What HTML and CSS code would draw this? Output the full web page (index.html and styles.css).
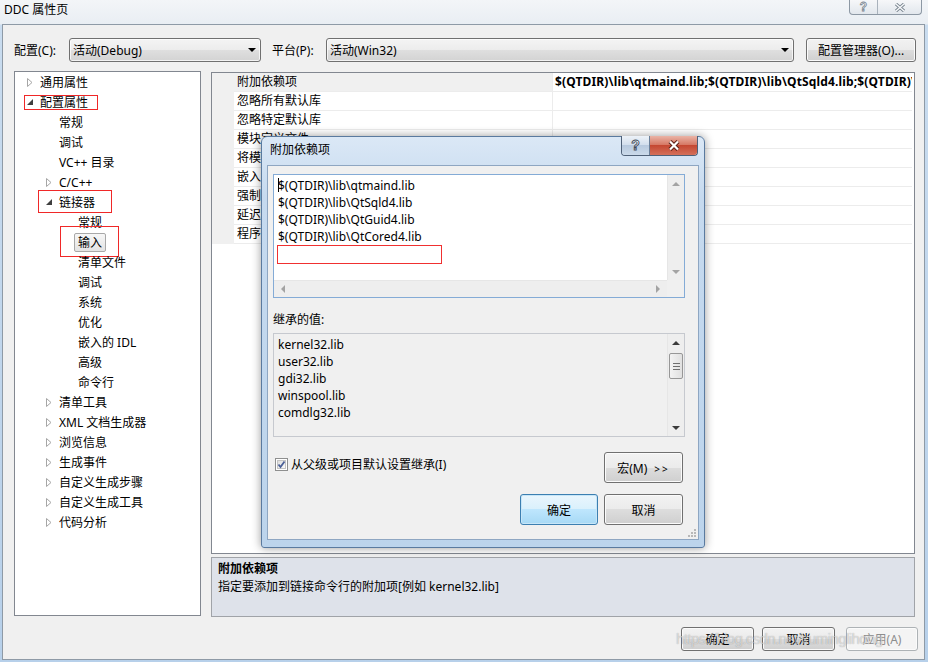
FILE: index.html
```html
<!DOCTYPE html>
<html lang="zh-CN">
<head>
    <meta charset="UTF-8">
    <meta name="viewport" content="width=device-width, initial-scale=1.0">
    <title>DDC 属性页</title>
    <link rel="stylesheet" href="styles.css">
</head>
<body>
<div class="window">
    <div class="titlebar">
        <div class="title">DDC 属性页</div>
        <div class="caption">
            <span class="cap-help">?</span>
            <span class="cap-close">
                <svg width="12" height="9" viewBox="0 0 12 9"><path d="M2 1 L10 8 M10 1 L2 8" stroke="#7b8691" stroke-width="3.2"/><path d="M2 1 L10 8 M10 1 L2 8" stroke="#f6f8fa" stroke-width="1.4"/></svg>
            </span>
        </div>
    </div>

    <div class="client">
        <div class="toolbar">
            <span class="tb-label">配置(C):</span>
            <div class="combo combo-config">活动(Debug)<span class="combo-arrow"></span></div>
            <span class="tb-label tb-label-2">平台(P):</span>
            <div class="combo combo-platform">活动(Win32)<span class="combo-arrow"></span></div>
            <button class="btn btn-manager">配置管理器(O)...</button>
        </div>

        <div class="main">
            <div class="tree">
                <div class="node lv0"><span class="tw"><svg width="6" height="9" viewBox="0 0 6 9"><path d="M0.5 0.5 L5 4.5 L0.5 8.5 Z" fill="#fff" stroke="#a6a6a6"/></svg></span>通用属性</div>
                <div class="node lv0"><span class="tw"><svg width="6" height="6" viewBox="0 0 6 6"><path d="M6 0 V6 H0 Z" fill="#3f3f3f"/></svg></span>配置属性<span class="mark mark-config"></span></div>
                <div class="node lv1"><span class="tw"></span>常规</div>
                <div class="node lv1"><span class="tw"></span>调试</div>
                <div class="node lv1"><span class="tw"></span>VC++ 目录</div>
                <div class="node lv1"><span class="tw"><svg width="6" height="9" viewBox="0 0 6 9"><path d="M0.5 0.5 L5 4.5 L0.5 8.5 Z" fill="#fff" stroke="#a6a6a6"/></svg></span>C/C++</div>
                <div class="node lv1"><span class="tw"><svg width="6" height="6" viewBox="0 0 6 6"><path d="M6 0 V6 H0 Z" fill="#3f3f3f"/></svg></span>链接器<span class="mark mark-linker"></span></div>
                <div class="node lv2"><span class="tw"></span>常规</div>
                <div class="node lv2"><span class="tw"></span><span class="sel">输入</span><span class="mark mark-input"></span></div>
                <div class="node lv2"><span class="tw"></span>清单文件</div>
                <div class="node lv2"><span class="tw"></span>调试</div>
                <div class="node lv2"><span class="tw"></span>系统</div>
                <div class="node lv2"><span class="tw"></span>优化</div>
                <div class="node lv2"><span class="tw"></span>嵌入的 IDL</div>
                <div class="node lv2"><span class="tw"></span>高级</div>
                <div class="node lv2"><span class="tw"></span>命令行</div>
                <div class="node lv1"><span class="tw"><svg width="6" height="9" viewBox="0 0 6 9"><path d="M0.5 0.5 L5 4.5 L0.5 8.5 Z" fill="#fff" stroke="#a6a6a6"/></svg></span>清单工具</div>
                <div class="node lv1"><span class="tw"><svg width="6" height="9" viewBox="0 0 6 9"><path d="M0.5 0.5 L5 4.5 L0.5 8.5 Z" fill="#fff" stroke="#a6a6a6"/></svg></span>XML 文档生成器</div>
                <div class="node lv1"><span class="tw"><svg width="6" height="9" viewBox="0 0 6 9"><path d="M0.5 0.5 L5 4.5 L0.5 8.5 Z" fill="#fff" stroke="#a6a6a6"/></svg></span>浏览信息</div>
                <div class="node lv1"><span class="tw"><svg width="6" height="9" viewBox="0 0 6 9"><path d="M0.5 0.5 L5 4.5 L0.5 8.5 Z" fill="#fff" stroke="#a6a6a6"/></svg></span>生成事件</div>
                <div class="node lv1"><span class="tw"><svg width="6" height="9" viewBox="0 0 6 9"><path d="M0.5 0.5 L5 4.5 L0.5 8.5 Z" fill="#fff" stroke="#a6a6a6"/></svg></span>自定义生成步骤</div>
                <div class="node lv1"><span class="tw"><svg width="6" height="9" viewBox="0 0 6 9"><path d="M0.5 0.5 L5 4.5 L0.5 8.5 Z" fill="#fff" stroke="#a6a6a6"/></svg></span>自定义生成工具</div>
                <div class="node lv1"><span class="tw"><svg width="6" height="9" viewBox="0 0 6 9"><path d="M0.5 0.5 L5 4.5 L0.5 8.5 Z" fill="#fff" stroke="#a6a6a6"/></svg></span>代码分析</div>
            </div>

            <div class="right">
                <div class="grid">
                    <div class="prop sel-row"><span class="gut"></span><span class="pname">附加依赖项</span><span class="pval bold">$(QTDIR)\lib\qtmaind.lib;$(QTDIR)\lib\QtSqld4.lib;$(QTDIR)\lib\QtGuid4.lib;$(QTDIR)\lib\QtCored4.lib;%(AdditionalDependencies)</span></div>
                    <div class="prop"><span class="gut"></span><span class="pname">忽略所有默认库</span><span class="pval"></span></div>
                    <div class="prop"><span class="gut"></span><span class="pname">忽略特定默认库</span><span class="pval"></span></div>
                    <div class="prop"><span class="gut"></span><span class="pname">模块定义文件</span><span class="pval"></span></div>
                    <div class="prop"><span class="gut"></span><span class="pname">将模块添加到程序集</span><span class="pval"></span></div>
                    <div class="prop"><span class="gut"></span><span class="pname">嵌入托管资源文件</span><span class="pval"></span></div>
                    <div class="prop"><span class="gut"></span><span class="pname">强制符号引用</span><span class="pval"></span></div>
                    <div class="prop"><span class="gut"></span><span class="pname">延迟加载的 DLL</span><span class="pval"></span></div>
                    <div class="prop"><span class="gut"></span><span class="pname">程序集链接资源</span><span class="pval"></span></div>
                </div>
                <div class="desc">
                    <div class="desc-title">附加依赖项</div>
                    <div>指定要添加到链接命令行的附加项[例如 kernel32.lib]</div>
                </div>
            </div>
        </div>

        <div class="footer">
            <button class="btn btn-foot">确定</button>
            <button class="btn btn-foot">取消</button>
            <button class="btn btn-foot btn-disabled">应用(A)</button>
        </div>
    </div>

    <!-- modal: 附加依赖项 -->
    <div class="dialog">
        <div class="dlg-titlebar">
            <div class="dlg-title">附加依赖项</div>
            <div class="dlg-caption">
                <span class="dlg-help">?</span>
                <span class="dlg-close">
                    <svg width="14" height="11" viewBox="0 0 14 11"><path d="M3 1.5 L11 9.5 M11 1.5 L3 9.5" stroke="#5a2118" stroke-width="4.2"/><path d="M3 1.5 L11 9.5 M11 1.5 L3 9.5" stroke="#fff" stroke-width="2.2"/></svg>
                </span>
            </div>
        </div>
        <div class="dlg-client">
            <div class="edit">
                <div class="edit-text">
                    <div><span class="caret"></span>$(QTDIR)\lib\qtmaind.lib</div>
                    <div>$(QTDIR)\lib\QtSqld4.lib</div>
                    <div>$(QTDIR)\lib\QtGuid4.lib</div>
                    <div>$(QTDIR)\lib\QtCored4.lib</div>
                    <div class="new-line"></div>
                </div>
                <div class="vscroll">
                    <span class="sb-btn"><span class="arr-up"></span></span>
                    <span class="sb-btn"><span class="arr-down"></span></span>
                </div>
                <div class="hscroll">
                    <span class="arr-left"></span>
                    <span class="arr-right"></span>
                </div>
                <div class="sb-corner"></div>
            </div>

            <div class="inh-label">继承的值:</div>
            <div class="list">
                <div class="list-text">
                    <div>kernel32.lib</div>
                    <div>user32.lib</div>
                    <div>gdi32.lib</div>
                    <div>winspool.lib</div>
                    <div>comdlg32.lib</div>
                </div>
                <div class="vscroll active">
                    <span class="sb-btn"><span class="arr-up"></span></span>
                    <span class="thumb"><i></i><i></i><i></i></span>
                    <span class="sb-fill"></span>
                    <span class="sb-btn"><span class="arr-down"></span></span>
                </div>
            </div>

            <div class="opt-row">
                <span class="check-label">
                    <svg width="13" height="13" viewBox="0 0 13 13">
                        <defs><linearGradient id="cb" x1="0" y1="0" x2="1" y2="1"><stop offset="0" stop-color="#dcdcdc"/><stop offset="1" stop-color="#fbfbfb"/></linearGradient></defs>
                        <rect x="0.5" y="0.5" width="12" height="12" fill="#fff" stroke="#8e8f8f"/>
                        <rect x="2.5" y="2.5" width="8" height="8" fill="url(#cb)" stroke="#c4c4c4"/>
                        <path d="M3.5 6.5 L5.5 9 L9.5 3.5" fill="none" stroke="#4a5f97" stroke-width="1.8"/>
                    </svg>
                    从父级或项目默认设置继承(I)
                </span>
                <button class="btn btn-macro">宏(M)<span class="chev">&gt;&gt;</span></button>
            </div>

            <div class="dlg-buttons">
                <button class="btn btn-default btn-ok">确定</button>
                <button class="btn btn-cancel">取消</button>
            </div>

            <svg class="grip" width="11" height="11" viewBox="0 0 11 11">
                <g fill="#b8b8b8"><rect x="8" y="2" width="2" height="2"/><rect x="5" y="5" width="2" height="2"/><rect x="8" y="5" width="2" height="2"/><rect x="2" y="8" width="2" height="2"/><rect x="5" y="8" width="2" height="2"/><rect x="8" y="8" width="2" height="2"/></g>
            </svg>
        </div>
    </div>

    <div class="watermark">https://blog.csdn.net/xuminglihong</div>
</div>
</body>
</html>
```

FILE: styles.css
```css
* {
    box-sizing: border-box;
}

body {
    margin: 0;
    font-family: "Noto Sans", "Noto Sans CJK SC", sans-serif;
    font-size: 12px;
    color: #000;
}

.window {
    position: relative;
    width: 928px;
    height: 662px;
    overflow: hidden;
    background: linear-gradient(to bottom, #f3f5f8 0, #e9eef3 24px, #c9dcef 25px, #b7d0ea 100%);
}

/* title bar */
.titlebar {
    height: 24px;
    display: flex;
    justify-content: space-between;
    align-items: flex-start;
}

.title {
    padding: 2px 0 0 4px;
    line-height: 16px;
}

.caption {
    display: flex;
    height: 15px;
    margin-right: 6px;
    border: 1px solid #8d98a4;
    border-top: 0;
    border-radius: 0 0 4px 4px;
    background: linear-gradient(#f6f7f9, #e2e7ed);
    overflow: hidden;
}

.cap-help {
    width: 28px;
    border-right: 1px solid #a9b2bc;
    text-align: center;
    font: bold 12px/14px "Liberation Sans", sans-serif;
    color: #f6f8fa;
    -webkit-text-stroke: 0.8px #7b8691;
}

.cap-close {
    width: 43px;
    display: flex;
    align-items: center;
    justify-content: center;
}

/* main client */
.client {
    margin-left: 2px;
    width: 923px;
    height: 636px;
    border: 1px solid #8e9aa6;
    background: #f0f0f0;
    padding: 13px 0 0 11px;
}

.toolbar {
    display: flex;
    align-items: center;
    height: 24px;
}

.tb-label {
    width: 55px;
}

.tb-label-2 {
    margin-left: 11px;
    width: 54px;
}

.combo {
    height: 24px;
    display: flex;
    align-items: center;
    padding: 0 4px 0 3px;
    border: 1px solid #707070;
    border-radius: 3px;
    background: linear-gradient(#f4f4f4 0, #ececec 50%, #dfdfdf 50%, #d3d3d3 100%);
    box-shadow: inset 0 0 0 1px rgba(255, 255, 255, 0.7);
}

.combo-config {
    width: 192px;
}

.combo-platform {
    width: 468px;
}

.combo-arrow {
    margin-left: auto;
    border-left: 4px solid transparent;
    border-right: 4px solid transparent;
    border-top: 4px solid #000;
}

.btn {
    font: inherit;
    color: #000;
    height: 24px;
    padding: 0;
    border: 1px solid #707070;
    border-radius: 3px;
    background: linear-gradient(#f2f2f2 0, #ebebeb 50%, #dddddd 50%, #cfcfcf 100%);
    box-shadow: inset 0 0 0 1px #fbfbfb;
}

.btn-manager {
    margin-left: 12px;
    width: 110px;
}

.main {
    display: flex;
    margin-top: 9px;
}

/* tree */
.tree {
    width: 187px;
    height: 545px;
    border: 1px solid #828790;
    background: #fff;
}

.node {
    position: relative;
    display: flex;
    align-items: center;
    height: 20px;
    white-space: nowrap;
}

.lv0 { padding-left: 10px; }
.lv1 { padding-left: 29px; }
.lv2 { padding-left: 48px; }

.tw {
    width: 15px;
    display: flex;
    align-items: center;
    padding-left: 2px;
}

.sel {
    margin-left: -4px;
    padding: 0 3px;
    line-height: 17px;
    border: 1px solid #a8a8a8;
    border-radius: 2px;
    background: linear-gradient(#f7f7f7, #e3e3e3);
}

.mark {
    position: absolute;
    border: 1px solid #f02828;
}

.mark-config { left: 9px; top: 3px; width: 74px; height: 15px; }
.mark-linker { left: 23px; top: -2px; width: 74px; height: 23px; }
.mark-input { left: 45px; top: -6px; width: 59px; height: 31px; }

/* property grid */
.right {
    margin-left: 10px;
    width: 704px;
    padding-top: 1px;
}

.grid {
    height: 482px;
    border: 1px solid #828790;
    background: #fff;
    overflow: hidden;
}

.prop {
    display: grid;
    grid-template-columns: 22px 318px 360px;
    height: 19px;
    line-height: 18px;
}

.gut {
    background: #f0f0f0;
}

.pname,
.pval {
    border-bottom: 1px solid #ececec;
    padding-left: 3px;
    white-space: nowrap;
    overflow: hidden;
}

.pval {
    border-left: 1px solid #ececec;
    padding-left: 2px;
    text-overflow: clip;
}

.sel-row .pname {
    background: #f0f0f0;
}

.bold {
    font-weight: bold;
    letter-spacing: 0.15px;
}

.desc {
    margin-top: 3px;
    height: 60px;
    border: 1px solid #a0a3a8;
    background: #dee2ea;
    padding: 2px 6px;
    line-height: 18px;
}

.desc-title {
    font-weight: bold;
}

.footer {
    display: flex;
    justify-content: flex-end;
    margin-top: 10px;
    padding-right: 6px;
}

.btn-foot {
    width: 73px;
    margin-left: 8px;
}

.btn-disabled {
    width: 72px;
    margin-left: 11px;
    color: #8d8d8d;
    border-color: #adb2b5;
    background: #f4f4f4;
}

/* dialog */
.dialog {
    position: absolute;
    left: 261px;
    top: 136px;
    width: 444px;
    height: 412px;
    display: flex;
    flex-direction: column;
    padding: 0 5px 7px 5px;
    border: 1px solid #5a7a9f;
    border-radius: 6px 6px 3px 3px;
    background: linear-gradient(#dbe8f6 0, #c6daef 60px, #bcd4ec 100%);
    box-shadow: 0 0 10px rgba(0, 0, 0, 0.4);
}

.dlg-titlebar {
    height: 28px;
    display: flex;
    justify-content: space-between;
    align-items: flex-start;
}

.dlg-title {
    padding: 5px 0 0 3px;
    line-height: 16px;
}

.dlg-caption {
    display: flex;
    height: 20px;
    margin-top: -1px;
    margin-right: 1px;
    border: 1px solid #4f6178;
    border-top: 0;
    border-radius: 0 0 4px 4px;
    overflow: hidden;
}

.dlg-help {
    width: 28px;
    border-right: 1px solid #6a7f99;
    background: linear-gradient(#edf2f8, #d3dfed 45%, #b7c9de 50%, #cbdaea 100%);
    text-align: center;
    font: bold 14px/19px "Liberation Sans", sans-serif;
    color: #fff;
    -webkit-text-stroke: 0.9px #3d4a5a;
}

.dlg-close {
    width: 47px;
    display: flex;
    align-items: center;
    justify-content: center;
    background: linear-gradient(#eab4a6, #d77a66 45%, #c54832 50%, #d4705a 100%);
}

.dlg-client {
    position: relative;
    flex: 1;
    border: 1px solid #8ea6c2;
    background: #f0f0f0;
    padding: 8px 13px 0 5px;
}

.edit,
.list {
    display: grid;
    grid-template-columns: 1fr 17px;
}

.edit {
    height: 124px;
    grid-template-rows: 1fr 17px;
    border: 1px solid #84abd6;
    background: #fff;
}

.edit-text,
.list-text {
    padding: 2px 0 0 4px;
    line-height: 17px;
    white-space: nowrap;
}

.caret {
    display: inline-block;
    width: 0;
    height: 14px;
    margin-right: -1px;
    border-left: 1px solid #000;
    vertical-align: -2px;
}

.new-line {
    width: 165px;
    height: 19px;
    margin-left: -1px;
    border: 1px solid #f03030;
}

.vscroll {
    display: flex;
    flex-direction: column;
    justify-content: space-between;
    background: #eeeeee;
    border-left: 1px solid #e6e6e6;
}

.sb-btn {
    height: 17px;
    display: flex;
    align-items: center;
    justify-content: center;
}

.hscroll {
    display: flex;
    justify-content: space-between;
    align-items: center;
    padding: 0 7px;
    background: #eeeeee;
    border-top: 1px solid #e6e6e6;
}

.sb-corner {
    background: #f0f0f0;
}

.arr-up,
.arr-down {
    border-left: 4px solid transparent;
    border-right: 4px solid transparent;
}

.arr-up { border-bottom: 4px solid #a3a3a3; }
.arr-down { border-top: 4px solid #a3a3a3; }

.arr-left,
.arr-right {
    border-top: 4px solid transparent;
    border-bottom: 4px solid transparent;
}

.arr-left { border-right: 4px solid #a3a3a3; }
.arr-right { border-left: 4px solid #a3a3a3; }

.active .arr-up { border-bottom-color: #3b3b3b; }
.active .arr-down { border-top-color: #3b3b3b; }

.inh-label {
    margin-top: 13px;
    line-height: 17px;
}

.list {
    margin-top: 5px;
    height: 104px;
    border: 1px solid #c6c9cf;
    background: #f0f0f0;
}

.vscroll.active {
    justify-content: flex-start;
    align-items: stretch;
}

.thumb {
    margin: 2px 1px 0 1px;
    height: 26px;
    border: 1px solid #979797;
    border-radius: 2px;
    background: linear-gradient(to right, #f3f3f3, #e0e0e0);
    display: flex;
    flex-direction: column;
    align-items: center;
    justify-content: center;
    gap: 2px;
}

.thumb i {
    width: 7px;
    height: 1px;
    background: #6f6f6f;
}

.sb-fill {
    flex: 1;
}

.opt-row {
    display: flex;
    align-items: flex-start;
    margin-top: 15px;
}

.check-label {
    display: flex;
    align-items: center;
    gap: 3px;
    margin: 6px 0 0 2px;
    line-height: 13px;
}

.btn-macro {
    margin-left: auto;
    margin-right: 2px;
    width: 79px;
    height: 31px;
}

.chev {
    margin-left: 7px;
    font-size: 10px;
    letter-spacing: 2px;
}

.dlg-buttons {
    display: flex;
    justify-content: flex-end;
    gap: 6px;
    margin-top: 11px;
    padding-right: 2px;
}

.btn-ok {
    width: 78px;
    height: 31px;
}

.btn-cancel {
    width: 79px;
    height: 31px;
}

.btn-default {
    border-color: #3c7fb1;
    background: linear-gradient(#eaf6fd 0, #d9f0fc 50%, #bee6fd 50%, #a7d9f5 100%);
    box-shadow: inset 0 0 0 1px #c7e6f8;
}

.grip {
    position: absolute;
    right: 1px;
    bottom: 1px;
}

.watermark {
    position: absolute;
    left: 676px;
    top: 630px;
    font: 15px/18px "Liberation Sans", sans-serif;
    letter-spacing: -0.6px;
    color: rgba(255, 255, 255, 0.55);
    text-shadow: 0 0 1px rgba(0, 0, 0, 0.35);
    pointer-events: none;
}
```
